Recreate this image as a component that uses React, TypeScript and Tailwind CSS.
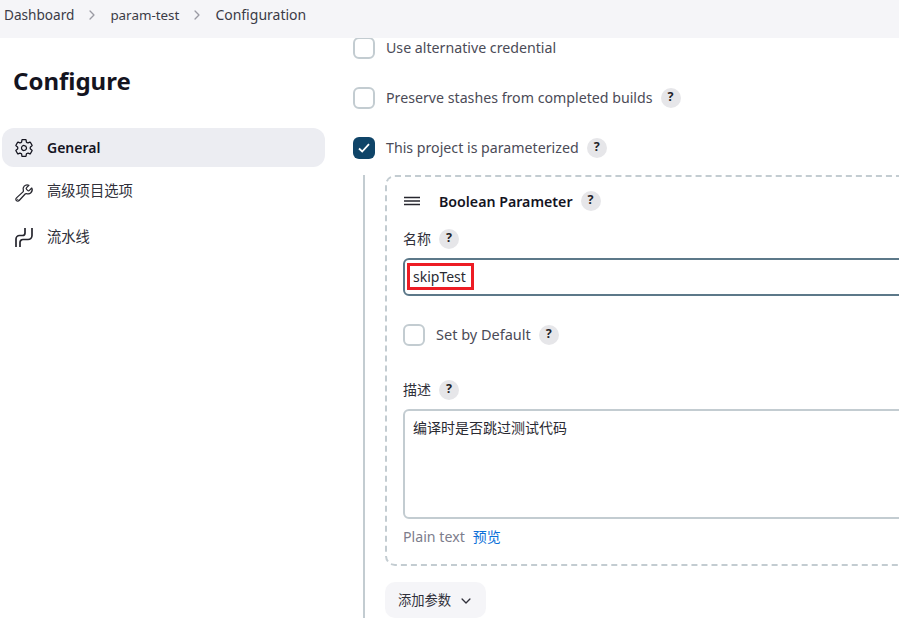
import React from 'react';
import { IoSettingsOutline, IoBuildOutline, IoChevronDown, IoChevronForward } from 'react-icons/io5';

const font = { fontFamily: '"Noto Sans", "Noto Sans CJK SC", sans-serif' };

const Help = () => (
  <span className="ml-[8px] flex h-5 w-5 shrink-0 items-center justify-center rounded-full bg-[#e6e6e9] pb-px text-[12.5px] font-bold text-[#1f1f28]">?</span>
);

const Checkbox = ({ checked }: { checked?: boolean }) =>
  checked ? (
    <span className="flex h-[22px] w-[22px] shrink-0 items-center justify-center rounded-md bg-[#0f4468]">
      <svg viewBox="0 0 12 10" className="h-[10px] w-3" fill="none" stroke="white" strokeWidth="1.8">
        <path d="M1 5.5l3.2 3L11 1.2" />
      </svg>
    </span>
  ) : (
    <span className="block h-[22px] w-[22px] shrink-0 rounded-md border-2 border-[#c3ccd1] bg-white" />
  );

const CheckRow = ({ label, checked, help, className, labelClass }: { label: string; checked?: boolean; help?: boolean; className?: string; labelClass?: string }) => (
  <div className={`flex h-[22px] items-center ${className ?? ''}`}>
    <Checkbox checked={checked} />
    <span className={`ml-[11px] pb-px text-[#4b4b57] ${labelClass ?? 'text-[14.2px]'}`}>{label}</span>
    {help && <Help />}
  </div>
);

const Chevron = () => <IoChevronForward className="h-[14px] w-[14px] text-[#9a9aa3]" />;

const PipelineIcon = () => (
  <svg viewBox="0 0 20 20" className="h-5 w-5" fill="none" stroke="#26262e" strokeWidth="1.7">
    <path d="M2 20v-8a3.5 3.5 0 0 1 3.5-3.5h3A2.5 2.5 0 0 0 11 6V1" />
    <path d="M6 20v-4.5a3 3 0 0 1 3-3h5a4 4 0 0 0 4-4V1" />
  </svg>
);

export default function App() {
  return (
    <div style={font} className="h-[626px] w-[899px] overflow-hidden bg-white">
      {/* Breadcrumb */}
      <div className="relative z-10 flex h-[38px] items-center gap-[11px] bg-[#f5f5f8] pb-[9px] pl-1 text-[#3b3b46]">
        <span className="pt-[2px] text-[13.6px]">Dashboard</span>
        <Chevron />
        <span className="pt-[2px] text-[13.4px]">param-test</span>
        <Chevron />
        <span className="text-[14px]">Configuration</span>
      </div>

      <div className="flex">
        {/* Sidebar */}
        <div className="w-[353px] shrink-0 pl-[2px]">
          <h1 className="mb-[29px] mt-[25px] pl-[11px] text-[24px] font-bold leading-9 text-[#14141f]">Configure</h1>
          <div className="flex h-[39px] w-[323px] items-center rounded-xl bg-[#ecedf2] pl-3">
            <IoSettingsOutline className="h-5 w-5 text-[#14141f]" />
            <span className="ml-[13px] text-[14px] font-semibold text-[#14141f]">General</span>
          </div>
          <div className="mt-[6px] flex h-[39px] items-center pl-3">
            <IoBuildOutline className="h-5 w-5 text-[#26262e]" />
            <span className="ml-[13px] pb-[4px] text-[14.3px] text-[#30303a]">高级项目选项</span>
          </div>
          <div className="mt-[5px] flex h-[39px] items-center pl-3">
            <PipelineIcon />
            <span className="ml-[13px] text-[14.3px] text-[#30303a]">流水线</span>
          </div>
        </div>

        {/* Main form */}
        <div className="-mt-px w-[700px] shrink-0">
          <CheckRow label="Use alternative credential" />
          <CheckRow label="Preserve stashes from completed builds" help className="mt-[28px]" />
          <CheckRow label="This project is parameterized" checked help className="mt-[28px]" />

          <div className="ml-[10px] mt-[16px] h-[443px] border-l-2 border-[#c3ccd1] pl-[20px]">
            <div className="h-[391px] rounded-[10px] border-2 border-dashed border-[#c3ccd1] pl-[16px] pt-[14px]">
              <div className="flex h-5 items-center">
                <svg viewBox="0 0 16 10" className="ml-[1px] h-[10px] w-4" stroke="#26262e" strokeWidth="1.4">
                  <path d="M0 1.5h16M0 5h16M0 8.5h16" />
                </svg>
                <span className="ml-[19px] pt-[2px] text-[14.2px] font-semibold text-[#14141f]">Boolean Parameter</span>
                <Help />
              </div>
              <div className="mt-[18px] flex h-5 items-center">
                <span className="pb-[2px] text-[14px] text-[#30303a]">名称</span>
                <Help />
              </div>
              <div className="relative mt-[9px] flex h-[38px] items-center rounded-md border-2 border-[#5c7889] pb-[2px] pl-2 text-[14px] text-[#2a2a33]">
                skipTest
                <span className="absolute left-[2px] top-[3px] h-[27px] w-[67px] border-[3px] border-[#ed1c24]" />
              </div>
              <CheckRow label="Set by Default" help labelClass="text-[14.5px]" className="mt-[28px]" />
              <div className="mt-[34px] flex h-5 items-center">
                <span className="pb-[2px] text-[14px] text-[#30303a]">描述</span>
                <Help />
              </div>
              <div className="mt-[9px] h-[110px] rounded-md border-2 border-[#c3ccd1] px-2 py-[8px] text-[14px] leading-[18px] text-[#2a2a33]">
                编译时是否跳过测试代码
              </div>
              <div className="mt-[7px] flex text-[14.2px]">
                <span className="text-[#7d7d8c]">Plain text</span>
                <span className="ml-2 text-[14px] text-[#0b6fd8]">预览</span>
              </div>
            </div>
            <div className="mt-[16px] flex h-[36px] w-[101px] items-center justify-center rounded-[10px] bg-[#f5f5f8] pt-px text-[13.3px] text-[#30303a]">
              添加参数
              <IoChevronDown className="ml-2 h-[14px] w-[14px]" />
            </div>
          </div>
        </div>
      </div>
    </div>
  );
}
